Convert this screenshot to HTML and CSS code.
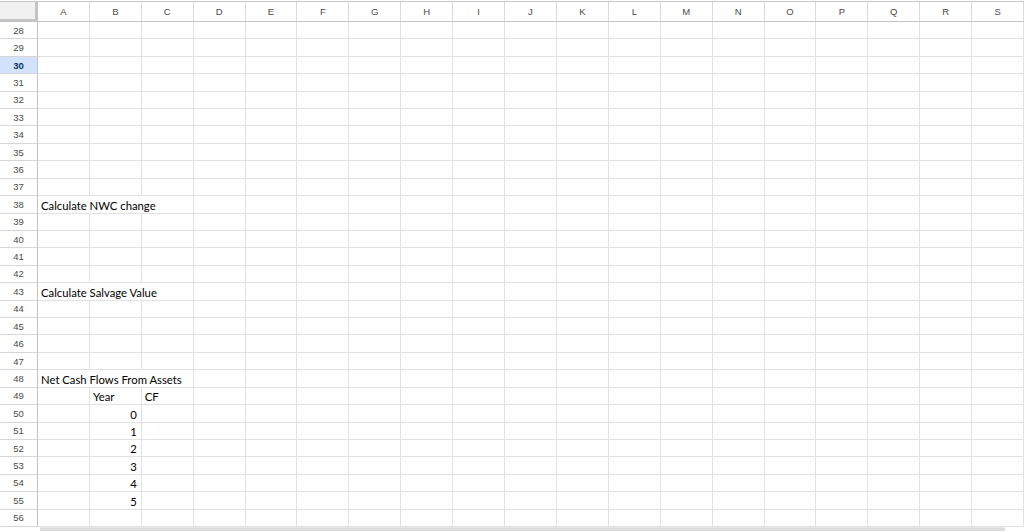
FILE: index.html
```html
<!DOCTYPE html>
<html lang="en">
<head>
    <meta charset="UTF-8">
    <title>Sheet</title>
    <link rel="stylesheet" href="styles.css">
</head>
<body>
    <!-- Spreadsheet grid, cells are built in script.js -->
    <div class="sheet" id="sheet">
        <div class="corner"></div>
    </div>
    <div class="hscroll"><div class="thumb"></div></div>
    <script src="script.js"></script>
</body>
</html>
```

FILE: styles.css
```css
* {
    margin: 0;
    padding: 0;
    box-sizing: border-box;
}

html, body {
    height: 100%;
    overflow: hidden;
    background: #fff;
}

body {
    padding-top: 1px;
}

.sheet {
    display: grid;
    grid-template-columns: 38px repeat(19, 1fr);
    grid-template-rows: 20px repeat(29, 1fr);
    height: 526px;
    border-top: 1px solid #c7c7c7;
}

.corner {
    background: #f1f1f1;
    border-right: 3px solid #c4c4c4;
    border-bottom: 3px solid #c4c4c4;
}

.col-head,
.row-head {
    font-family: "Liberation Sans", Arial, sans-serif;
    font-size: 9.5px;
    color: #4a4a4a;
    display: flex;
    align-items: center;
    justify-content: center;
}

.col-head {
    border-right: 1px solid #dadada;
    border-bottom: 1px solid #c4c4c4;
}

.row-head {
    border-right: 1px solid #c4c4c4;
    border-bottom: 1px solid #d6d6d6;
}

.row-head.active {
    background: #d3e3fd;
    color: #0b2f6b;
    font-weight: bold;
}

.cell {
    font-family: Lato, "Open Sans", sans-serif;
    font-size: 11.3px;
    color: #000;
    border-right: 1px solid #e2e2e2;
    border-bottom: 1px solid #e2e2e2;
    padding: 0 3px 1px;
    display: flex;
    align-items: flex-end;
    white-space: nowrap;
    overflow: hidden;
}

.cell.wide {
    grid-column: span 3;
}

.cell.num {
    justify-content: flex-end;
    padding-right: 4px;
}

.hscroll {
    height: 5px;
    padding-left: 40px;
    padding-right: 19px;
}

.hscroll .thumb {
    height: 4px;
    background: #dcdcdc;
    border-top: 1px solid #e6e6e6;
}
```

FILE: script.js
```javascript
const sheet = document.getElementById('sheet');
const cols = 'ABCDEFGHIJKLMNOPQRS'.split('');
const firstRow = 28;
const lastRow = 56;
const activeRow = 30;

// text cells: row -> { col index: [text, kind] }
const data = {
    38: { 0: ['Calculate NWC change', 'wide'] },
    43: { 0: ['Calculate Salvage Value', 'wide'] },
    48: { 0: ['Net Cash Flows From Assets', 'wide'] },
    49: { 1: ['Year'], 2: ['CF'] },
    50: { 1: ['0', 'num'] },
    51: { 1: ['1', 'num'] },
    52: { 1: ['2', 'num'] },
    53: { 1: ['3', 'num'] },
    54: { 1: ['4', 'num'] },
    55: { 1: ['5', 'num'] }
};

cols.forEach(c => {
    const h = document.createElement('div');
    h.className = 'col-head';
    h.textContent = c;
    sheet.appendChild(h);
});

for (let r = firstRow; r <= lastRow; r++) {
    const rh = document.createElement('div');
    rh.className = 'row-head' + (r === activeRow ? ' active' : '');
    rh.textContent = r;
    sheet.appendChild(rh);

    const row = data[r] || {};
    let i = 0;
    while (i < cols.length) {
        const cell = document.createElement('div');
        cell.className = 'cell';
        const entry = row[i];
        if (entry) {
            cell.textContent = entry[0];
            if (entry[1]) cell.classList.add(entry[1]);
        }
        sheet.appendChild(cell);
        i += entry && entry[1] === 'wide' ? 3 : 1;
    }
}
```
